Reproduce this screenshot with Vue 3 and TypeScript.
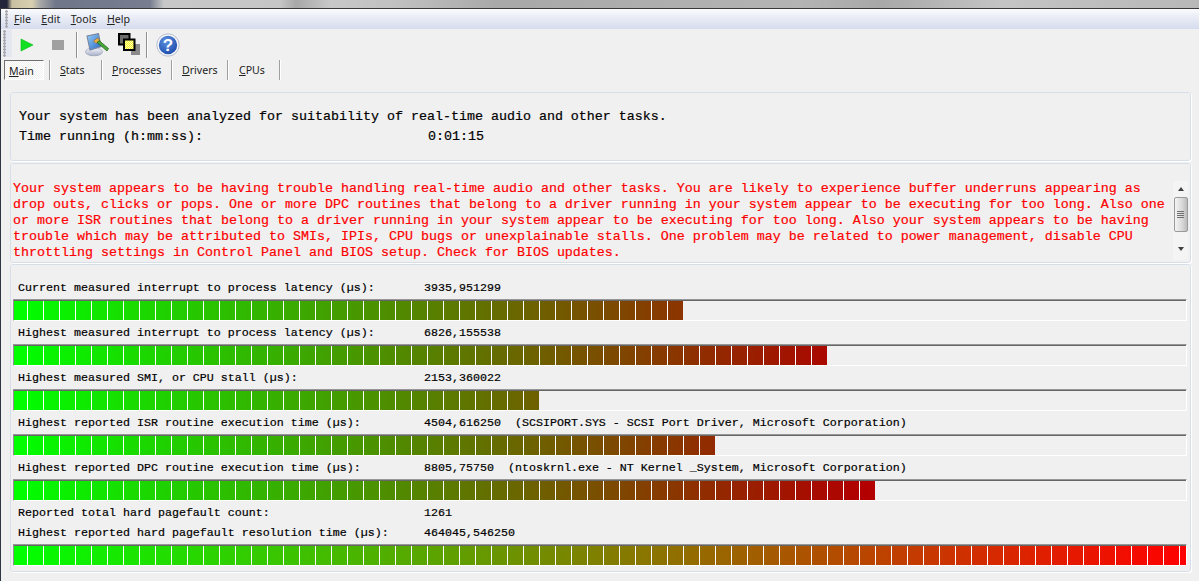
<script setup lang="ts">
interface Metric {
  label: string
  value: string
  detail?: string
  end?: number
  full?: boolean
}

const metrics: Metric[] = [
  { label: 'Current measured interrupt to process latency (µs):', value: '3935,951299', end: 683 },
  { label: 'Highest measured interrupt to process latency (µs):', value: '6826,155538', end: 827 },
  { label: 'Highest measured SMI, or CPU stall (µs):', value: '2153,360022', end: 539 },
  { label: 'Highest reported ISR routine execution time (µs):', value: '4504,616250', detail: '  (SCSIPORT.SYS - SCSI Port Driver, Microsoft Corporation)', end: 715 },
  { label: 'Highest reported DPC routine execution time (µs):', value: '8805,75750', detail: '  (ntoskrnl.exe - NT Kernel _System, Microsoft Corporation)', end: 875 },
  { label: 'Reported total hard pagefault count:', value: '1261' },
  { label: 'Highest reported hard pagefault resolution time (µs):', value: '464045,546250', end: 1186, full: true },
]

const redLines = [
  'Your system appears to be having trouble handling real-time audio and other tasks. You are likely to experience buffer underruns appearing as',
  'drop outs, clicks or pops. One or more DPC routines that belong to a driver running in your system appear to be executing for too long. Also one',
  'or more ISR routines that belong to a driver running in your system appear to be executing for too long. Also your system appears to be having',
  'trouble which may be attributed to SMIs, IPIs, CPU bugs or unexplainable stalls. One problem may be related to power management, disable CPU',
  'throttling settings in Control Panel and BIOS setup. Check for BIOS updates.',
]

const tabs = [
  { key: 'M', rest: 'ain', cls: 'tab-main' },
  { key: 'S', rest: 'tats', cls: 'tab-stats' },
  { key: 'P', rest: 'rocesses', cls: 'tab-proc' },
  { key: 'D', rest: 'rivers', cls: 'tab-drv' },
  { key: 'C', rest: 'PUs', cls: 'tab-cpu' },
]

const menus = [
  { key: 'F', rest: 'ile' },
  { key: 'E', rest: 'dit' },
  { key: 'T', rest: 'ools' },
  { key: 'H', rest: 'elp' },
]

function fillStyle(m: Metric) {
  const w = (m.end ?? 14) - 14
  const stops: string[] = []
  for (let x = 0; x <= w; x += 50) stops.push(stop(m, x))
  stops.push(stop(m, w))
  return { width: `${w}px`, background: `linear-gradient(90deg, ${stops.join(', ')})` }
}

function stop(m: Metric, x: number) {
  const r = m.full ? (x / 1172) * 255 : 0.209 * x
  const g = m.full ? 255 - (x / 1172) * 255 : Math.max(0, 255 - 0.304 * x)
  return `rgb(${Math.round(r)},${Math.round(g)},0) ${x}px`
}
</script>

<template>
  <div class="screen">
    <div class="title-strip"></div>
    <div class="window">
      <nav class="menubar">
        <span class="grip"></span>
        <span v-for="m in menus" :key="m.key" class="menu-item"><u>{{ m.key }}</u>{{ m.rest }}</span>
      </nav>

      <div class="toolbar">
        <span class="grip grip-tool"></span>
        <svg class="ico ico-play" width="14" height="14" viewBox="0 0 14 14">
          <path d="M1 1 L13 7 L1 13 Z" fill="#10e020" stroke="#08b818" stroke-width="0.6" />
        </svg>
        <span class="ico-stop"></span>
        <span class="tool-sep sep-a"></span>
        <svg class="ico ico-paint" width="24" height="24" viewBox="0 0 24 24">
          <defs>
            <linearGradient id="scr" x1="0" y1="0" x2="1" y2="1">
              <stop offset="0" stop-color="#9cd0f6" />
              <stop offset="1" stop-color="#2468c8" />
            </linearGradient>
            <linearGradient id="base" x1="0" y1="0" x2="0" y2="1">
              <stop offset="0" stop-color="#f4f6fc" />
              <stop offset="1" stop-color="#a8b0c8" />
            </linearGradient>
          </defs>
          <ellipse cx="9" cy="18.8" rx="8.6" ry="4" fill="url(#base)" stroke="#8890a8" stroke-width="0.5" />
          <path d="M2 3 L13.5 0.6 L16 13.5 L5 17 Z" fill="url(#scr)" stroke="#76849c" stroke-width="1.1" />
          <path d="M8.5 8 L12.5 5 L15 7.5 L11 10.5 Z" fill="#eeb040" stroke="#8a5010" stroke-width="0.5" />
          <path d="M14 7.5 L23.5 15.5 L22 18 L12 9.5 Z" fill="#48a838" stroke="#1c5a18" stroke-width="0.7" />
        </svg>
        <svg class="ico ico-win" width="23" height="23" viewBox="0 0 23 23">
          <defs>
            <pattern id="chk" width="2" height="2" patternUnits="userSpaceOnUse">
              <rect width="2" height="2" fill="#ffff10" />
              <rect width="1" height="1" fill="#f6f2c8" />
              <rect x="1" y="1" width="1" height="1" fill="#f6f2c8" />
            </pattern>
          </defs>
          <rect x="1" y="1" width="10.5" height="10.5" fill="#6c6c6c" stroke="#000" stroke-width="2" />
          <rect x="13" y="11" width="9" height="11" fill="#8a8a8a" />
          <rect x="6" y="6.5" width="10.5" height="10.5" fill="url(#chk)" stroke="#000" stroke-width="2" />
        </svg>
        <span class="tool-sep sep-b"></span>
        <svg class="ico ico-help" width="24" height="24" viewBox="0 0 24 24">
          <defs>
            <radialGradient id="hb" cx="0.4" cy="0.3" r="0.8">
              <stop offset="0" stop-color="#5c90e0" />
              <stop offset="1" stop-color="#1a48a8" />
            </radialGradient>
          </defs>
          <circle cx="12" cy="12" r="11.2" fill="#f4f6fa" stroke="#a8b0c0" stroke-width="0.8" />
          <circle cx="12" cy="12" r="9.2" fill="url(#hb)" />
          <text x="12" y="18" text-anchor="middle" class="help-q">?</text>
        </svg>
      </div>

      <div class="tabs">
        <span v-for="t in tabs" :key="t.key" class="tab" :class="t.cls"><u>{{ t.key }}</u>{{ t.rest }}</span>
      </div>

      <section class="panel panel-info">
        <p class="info-line">Your system has been analyzed for suitability of real-time audio and other tasks.</p>
        <p class="info-line info-grid"><span class="info-label">Time running (h:mm:ss):</span><span>0:01:15</span></p>
      </section>

      <section class="panel panel-warn">
        <div class="warn-text">
          <div v-for="(l, i) in redLines" :key="i" class="warn-line">{{ l }}</div>
        </div>
        <div class="scrollbar">
          <span class="arrow arrow-up"></span>
          <span class="thumb"><i></i><i></i><i></i><i></i></span>
          <span class="arrow arrow-down"></span>
        </div>
      </section>

      <section class="panel panel-metrics">
        <div v-for="m in metrics" :key="m.label" class="metric" :class="{ 'no-bar': !m.end }">
          <div class="metric-head">
            <span class="metric-label">{{ m.label }}</span>
            <span class="metric-value">{{ m.value }}{{ m.detail }}</span>
          </div>
          <div v-if="m.end" class="bar">
            <div class="fill" :style="fillStyle(m)"><span class="ticks"></span></div>
          </div>
        </div>
      </section>
    </div>
  </div>
</template>

<style scoped>
.screen {
  width: 1199px;
  height: 581px;
  overflow: hidden;
  display: flex;
  flex-direction: column;
  background: #f0f0f0;
}
.title-strip {
  height: 8px;
  flex: none;
  border-bottom: 1px solid #3a3a3c;
  background: linear-gradient(90deg, #23263a 0, #23263a 7px, #c8c0a0 12px, #d8d0b0 32px, #a8a8a8 40px, #70768a 56px, #787e90 150px, #c8c8c8 164px, #c6c6c6 280px, #a8a8a8 296px, #c8c8c8 330px, #c0c0c0 400px, #a8a8a8 500px, #b4b4b4 800px, #a8a8a8 880px, #c4c4c4 1000px, #b8b8b8 1199px);
}
.window {
  flex: 1;
  border-left: 1px solid #2e3440;
  display: flex;
  flex-direction: column;
  min-height: 0;
}
.menubar {
  height: 20px;
  flex: none;
  display: flex;
  align-items: center;
  position: relative;
  padding-left: 13px;
  gap: 10.4px;
  background: linear-gradient(180deg, #fbfcfe 0, #eef0f8 30%, #d6dcee 100%);
  font: 10.6px "Noto Sans", "Liberation Sans", sans-serif;
  color: #222;
}
.grip {
  position: absolute;
  left: 4px;
  top: 1px;
  bottom: 1px;
  width: 3px;
  background: radial-gradient(circle at 1.5px 1.5px, #a8a8b0 1.2px, transparent 1.5px) 0 0 / 3px 3px repeat-y;
}
.menu-item u, .tab u {
  text-underline-offset: 1px;
}
.toolbar {
  height: 31px;
  flex: none;
  position: relative;
  display: flex;
  align-items: center;
  padding-left: 19px;
}
.grip-tool {
  background-color: #e4e6f0;
  width: 9px;
  left: 2px;
  top: 1px;
  bottom: 3px;
}
.ico { flex: none; display: block; }
.ico-play { margin-right: 18px; }
.ico-stop {
  width: 12px;
  height: 10px;
  background: #a0a0a0;
  flex: none;
  margin-right: 12px;
}
.tool-sep {
  width: 2px;
  height: 26px;
  flex: none;
  background: linear-gradient(90deg, #909090 50%, #fff 50%);
}
.sep-a { margin-right: 7px; }
.ico-paint { margin-right: 9px; }
.ico-win { margin-right: 5px; }
.sep-b { margin-right: 8px; }
.help-q {
  fill: #fff;
  font: bold 17px "Liberation Sans", sans-serif;
}
.tabs {
  height: 20px;
  flex: none;
  display: flex;
  margin-left: 3px;
  font: 10.6px "Noto Sans", "Liberation Sans", sans-serif;
  color: #222;
}
.tab {
  display: flex;
  align-items: center;
  justify-content: flex-start;
  box-sizing: border-box;
  padding-left: 10px;
  white-space: pre;
  height: 20px;
  position: relative;
}
.tab::after {
  content: "";
  position: absolute;
  right: 0;
  top: 0;
  bottom: 0;
  width: 1px;
  background: #a0a0a0;
  box-shadow: 1px 0 0 #fff;
}
.tab-main {
  width: 46px;
  padding-left: 5px;
  padding-top: 2px;
  isolation: isolate;
}
.tab-main::before {
  content: "";
  position: absolute;
  left: 0;
  top: 0;
  width: 40px;
  height: 20px;
  box-sizing: border-box;
  border: 1px solid #fff;
  border-top: 1px solid #707070;
  border-left: 1px solid #707070;
  background: repeating-conic-gradient(#fff 0 25%, #f0f0f0 0 50%) 0 0 / 2px 2px;
  z-index: -1;
}
.tab-stats { width: 52px; }
.tab-proc { width: 70px; }
.tab-drv { width: 56px; }
.tab-cpu { width: 52px; padding-left: 11px; }
.panel {
  box-sizing: border-box;
  margin-left: 9px;
  width: 1181px;
  flex: none;
  background: #f0f0f0;
  border: 1px solid #fff;
  outline: 1px solid #d6dfe8;
  outline-offset: -1px;
  border-radius: 3px;
  box-shadow: 1px 1px 0 #fff;
  font-family: "Liberation Mono", "Courier New", monospace;
  -webkit-text-stroke: 0.2px currentColor;
}
.panel-info {
  margin-top: 12px;
  height: 69px;
  padding: 14px 0 0 8px;
  font-size: 13.33px;
  color: #000;
}
.info-line {
  margin: 0;
  height: 20px;
  line-height: 20px;
  white-space: pre;
}
.info-grid { display: flex; }
.info-label { width: 409px; flex: none; }
.panel-warn {
  margin-top: 2px;
  height: 100px;
  position: relative;
  padding: 17px 0 0 2px;
  font-size: 13.33px;
  color: #ff0000;
}
.warn-line {
  height: 16px;
  line-height: 16px;
  white-space: pre;
}
.scrollbar {
  position: absolute;
  right: 2px;
  top: 17px;
  bottom: 2px;
  width: 15px;
  background: #f4f4f4;
  display: flex;
  flex-direction: column;
  align-items: center;
}
.arrow {
  width: 0;
  height: 0;
  border-left: 3.5px solid transparent;
  border-right: 3.5px solid transparent;
  flex: none;
}
.arrow-up {
  border-bottom: 4px solid #404040;
  margin-top: 6px;
}
.arrow-down {
  border-top: 4px solid #404040;
  margin-top: 15px;
}
.thumb {
  margin-top: 6px;
  width: 14px;
  height: 35px;
  box-sizing: border-box;
  flex: none;
  border: 1px solid #9a9a9a;
  border-radius: 2px;
  background: linear-gradient(90deg, #f4f4f4, #d8d8d8 60%, #bcbcbc);
  display: flex;
  flex-direction: column;
  align-items: center;
  justify-content: center;
  gap: 1px;
}
.thumb i {
  display: block;
  width: 7px;
  height: 1px;
  background: #707070;
}
.panel-metrics {
  margin-top: 1px;
  height: 308px;
  padding: 13px 3px 0 2px;
}
.metric { margin-bottom: 2px; }
.metric.no-bar { margin-bottom: 0; height: 20px; }
.metric-head {
  height: 21px;
  line-height: 21px;
  display: flex;
  font-size: 11.67px;
  color: #000;
  padding-left: 5px;
  white-space: pre;
}
.no-bar .metric-head { height: 20px; line-height: 20px; }
.metric-label { width: 406px; flex: none; }
.bar {
  height: 22px;
  box-sizing: border-box;
  padding-top: 1px;
  border-top: 1px solid #969696;
  border-left: 1px solid #909090;
  border-bottom: 1px solid #fff;
  border-right: 1px solid #fff;
  box-shadow: inset 0 1px 0 #666;
}
.fill {
  height: 19px;
  position: relative;
}
.ticks {
  position: absolute;
  inset: 0;
  background: linear-gradient(90deg, transparent 15px, #fff 15px) -2px 0 / 16px 100% repeat-x;
}
</style>
